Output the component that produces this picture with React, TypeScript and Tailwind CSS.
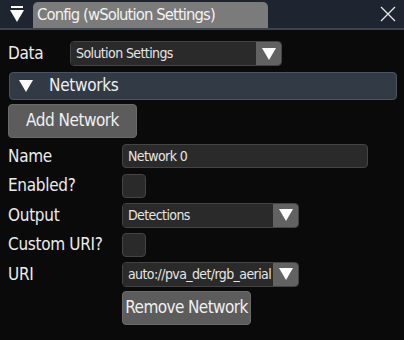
import React from 'react';

const font = { fontFamily: '"Liberation Sans Narrow", "DejaVu Sans Condensed", "Roboto", sans-serif' };

function Arrow({ className = '' }: { className?: string }) {
    return (
        <svg width="14" height="12" viewBox="0 0 14 12" className={className}>
            <polygon points="0,0 14,0 7,12" fill="#ffffff" />
        </svg>
    );
}

function Combo({ value, width }: { value: string; width: string }) {
    return (
        <div className={`flex h-[25px] ${width} rounded-[4px] border border-[#444] overflow-hidden`}>
            <div className="flex-1 bg-[#2a2a2a] text-[14px] tracking-[-0.6px] text-[#e6e6e6] pl-[5px] flex items-center whitespace-nowrap overflow-hidden">
                {value}
            </div>
            <div className="w-[25px] bg-[#626262] flex items-center justify-center">
                <Arrow />
            </div>
        </div>
    );
}

function Checkbox() {
    return <div className="w-[24px] h-[24px] rounded-[4px] bg-[#2a2a2a] border border-[#444]" />;
}

function Row({ label, children }: { label: string; children: React.ReactNode }) {
    return (
        <div className="flex items-center">
            <div className="w-[114px] text-[17px] tracking-[-0.3px] text-[#ececec]">{label}</div>
            {children}
        </div>
    );
}

export default function App() {
    return (
        <div className="w-[404px] h-[340px] bg-[#0a0a0a] overflow-hidden" style={font}>
            <div className="h-[30px] bg-[#1f2530] border-b-2 border-[#3b4250] flex items-end relative">
                <div className="w-[33px] h-full flex flex-col items-center justify-center gap-[2px]">
                    <div className="w-[12px] h-[2px] bg-white" />
                    <Arrow />
                </div>
                <div className="w-[235px] h-[26px] bg-[#7b7b7b] rounded-t-[5px] pl-[4px] text-[16.5px] tracking-[-0.9px] text-[#f2f2f2] leading-[26px] whitespace-nowrap">
                    Config (wSolution Settings)
                </div>
                <div className="flex-1" />
                <svg width="16" height="16" viewBox="0 0 16 16" className="mr-[8px] mb-[6px]">
                    <path d="M1 1 L15 15 M15 1 L1 15" stroke="#e8e8e8" strokeWidth="1.3" />
                </svg>
            </div>

            <div className="px-[8px] pt-[11px] flex flex-col">
                <div className="flex items-center">
                    <div className="w-[62px] text-[17px] tracking-[-0.3px] text-[#ececec]">Data</div>
                    <Combo value="Solution Settings" width="w-[212px]" />
                </div>
                <div className="mt-[5px] h-[28px] bg-[#323a46] border border-[#4b5361] rounded-[4px] flex items-center ml-[1px] mr-[-1px]">
                    <Arrow className="ml-[9px]" />
                    <span className="ml-[16px] text-[17px] tracking-[-0.3px] text-[#f0f0f0]">Networks</span>
                </div>
                <button className="mt-[4px] w-[129px] h-[34px] bg-[#5c5c5c] border border-[#6a6a6a] rounded-[4px] text-[17px] tracking-[-0.5px] text-[#f0f0f0] whitespace-nowrap">
                    Add Network
                </button>
                <div className="flex flex-col gap-[4px] mt-[6px]">
                    <Row label="Name">
                        <div className="w-[246px] h-[24px] rounded-[4px] bg-[#2a2a2a] border border-[#444] text-[14px] tracking-[-0.6px] text-[#e6e6e6] pl-[5px] flex items-center">
                            Network 0
                        </div>
                    </Row>
                    <Row label="Enabled?">
                        <Checkbox />
                    </Row>
                    <Row label="Output">
                        <Combo value="Detections" width="w-[177px]" />
                    </Row>
                    <Row label="Custom URI?">
                        <Checkbox />
                    </Row>
                    <Row label="URI">
                        <Combo value="auto://pva_det/rgb_aerial" width="w-[177px]" />
                    </Row>
                    <Row label="">
                        <button className="w-[129px] h-[34px] bg-[#5c5c5c] border border-[#6a6a6a] rounded-[4px] text-[17px] tracking-[-0.6px] text-[#f0f0f0] whitespace-nowrap overflow-hidden">
                            Remove Network
                        </button>
                    </Row>
                </div>
            </div>
        </div>
    );
}
